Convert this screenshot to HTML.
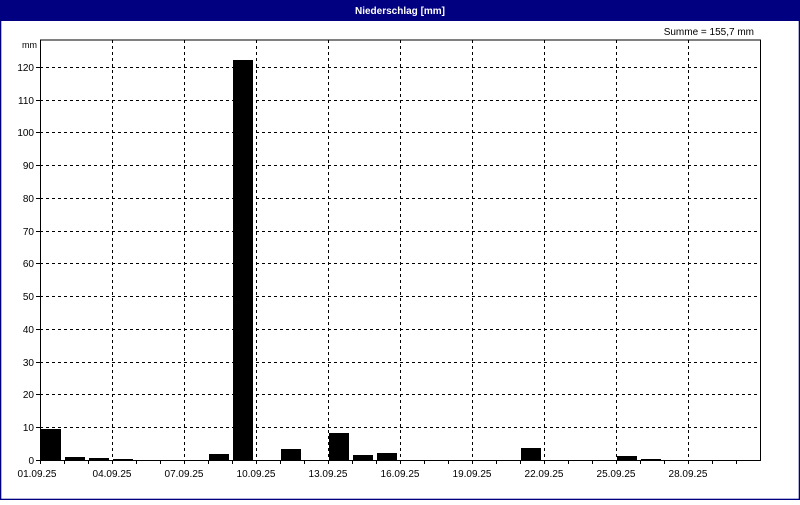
<!DOCTYPE html>
<html><head><style>
body{margin:0;width:800px;height:500px;overflow:hidden;background:#fff;font-family:"Liberation Sans","DejaVu Sans",sans-serif;}
</style></head><body>
<svg width="800" height="500" xmlns="http://www.w3.org/2000/svg" font-family="Liberation Sans, DejaVu Sans, sans-serif" font-size="10">
<rect x="0" y="0" width="800" height="500" fill="#fff"/>
<rect x="0" y="0" width="800" height="21" fill="#000080"/>
<rect x="0.5" y="0.5" width="799" height="499" fill="none" stroke="#000080"/>
<rect x="1" y="1" width="798" height="498" fill="none" stroke="#000080" stroke-width="0.6"/>
<text x="400" y="14" fill="#fff" font-weight="bold" text-anchor="middle">Niederschlag [mm]</text>
<text x="754" y="35" text-anchor="end">Summe = 155,7 mm</text>
<text x="37" y="48" text-anchor="end" font-size="9">mm</text>
<g stroke="#000" stroke-dasharray="3,3" stroke-width="1">
<line x1="40" y1="67.5" x2="760" y2="67.5"/><line x1="40" y1="100.5" x2="760" y2="100.5"/>
<line x1="40" y1="132.5" x2="760" y2="132.5"/><line x1="40" y1="165.5" x2="760" y2="165.5"/>
<line x1="40" y1="198.5" x2="760" y2="198.5"/><line x1="40" y1="231.5" x2="760" y2="231.5"/>
<line x1="40" y1="263.5" x2="760" y2="263.5"/><line x1="40" y1="296.5" x2="760" y2="296.5"/>
<line x1="40" y1="329.5" x2="760" y2="329.5"/><line x1="40" y1="362.5" x2="760" y2="362.5"/>
<line x1="40" y1="394.5" x2="760" y2="394.5"/><line x1="40" y1="427.5" x2="760" y2="427.5"/>
<line x1="112.5" y1="40" x2="112.5" y2="460"/><line x1="184.5" y1="40" x2="184.5" y2="460"/>
<line x1="256.5" y1="40" x2="256.5" y2="460"/><line x1="328.5" y1="40" x2="328.5" y2="460"/>
<line x1="400.5" y1="40" x2="400.5" y2="460"/><line x1="472.5" y1="40" x2="472.5" y2="460"/>
<line x1="544.5" y1="40" x2="544.5" y2="460"/><line x1="616.5" y1="40" x2="616.5" y2="460"/>
<line x1="688.5" y1="40" x2="688.5" y2="460"/>
</g>
<g fill="#000">
<rect x="41" y="429" width="20" height="31"/>
<rect x="65" y="457" width="20" height="3"/>
<rect x="89" y="458" width="20" height="2"/>
<rect x="113" y="459" width="20" height="1"/>
<rect x="209" y="454" width="20" height="6"/>
<rect x="233" y="60" width="20" height="400"/>
<rect x="281" y="449" width="20" height="11"/>
<rect x="329" y="433" width="20" height="27"/>
<rect x="353" y="455" width="20" height="5"/>
<rect x="377" y="453" width="20" height="7"/>
<rect x="521" y="448" width="20" height="12"/>
<rect x="617" y="456" width="20" height="4"/>
<rect x="641" y="459" width="20" height="1"/>
</g>
<path d="M40.5 40 V460.5 H760.5 V40 H40" fill="none" stroke="#000"/>
<g stroke="#000">
<path d="M64.5 460v4M88.5 460v4M112.5 460v4M136.5 460v4M160.5 460v4M184.5 460v4M208.5 460v4M232.5 460v4M256.5 460v4M280.5 460v4M304.5 460v4M328.5 460v4M352.5 460v4M376.5 460v4M400.5 460v4M424.5 460v4M448.5 460v4M472.5 460v4M496.5 460v4M520.5 460v4M544.5 460v4M568.5 460v4M592.5 460v4M616.5 460v4M640.5 460v4M664.5 460v4M688.5 460v4M712.5 460v4M736.5 460v4M40.5 460v4"/>
<path d="M36 67.5h4M36 100.5h4M36 132.5h4M36 165.5h4M36 198.5h4M36 231.5h4M36 263.5h4M36 296.5h4M36 329.5h4M36 362.5h4M36 394.5h4M36 427.5h4M36 460.5h4"/>
</g>
<g text-anchor="end">
<text x="34" y="71">120</text><text x="34" y="104">110</text><text x="34" y="136">100</text>
<text x="34" y="169">90</text><text x="34" y="202">80</text><text x="34" y="235">70</text>
<text x="34" y="267">60</text><text x="34" y="300">50</text><text x="34" y="333">40</text>
<text x="34" y="366">30</text><text x="34" y="398">20</text><text x="34" y="431">10</text>
<text x="34" y="464">0</text>
</g>
<g text-anchor="middle">
<text x="37" y="477">01.09.25</text><text x="112" y="477">04.09.25</text><text x="184" y="477">07.09.25</text>
<text x="256" y="477">10.09.25</text><text x="328" y="477">13.09.25</text><text x="400" y="477">16.09.25</text>
<text x="472" y="477">19.09.25</text><text x="544" y="477">22.09.25</text><text x="616" y="477">25.09.25</text>
<text x="688" y="477">28.09.25</text>
</g>
</svg>
</body></html>
